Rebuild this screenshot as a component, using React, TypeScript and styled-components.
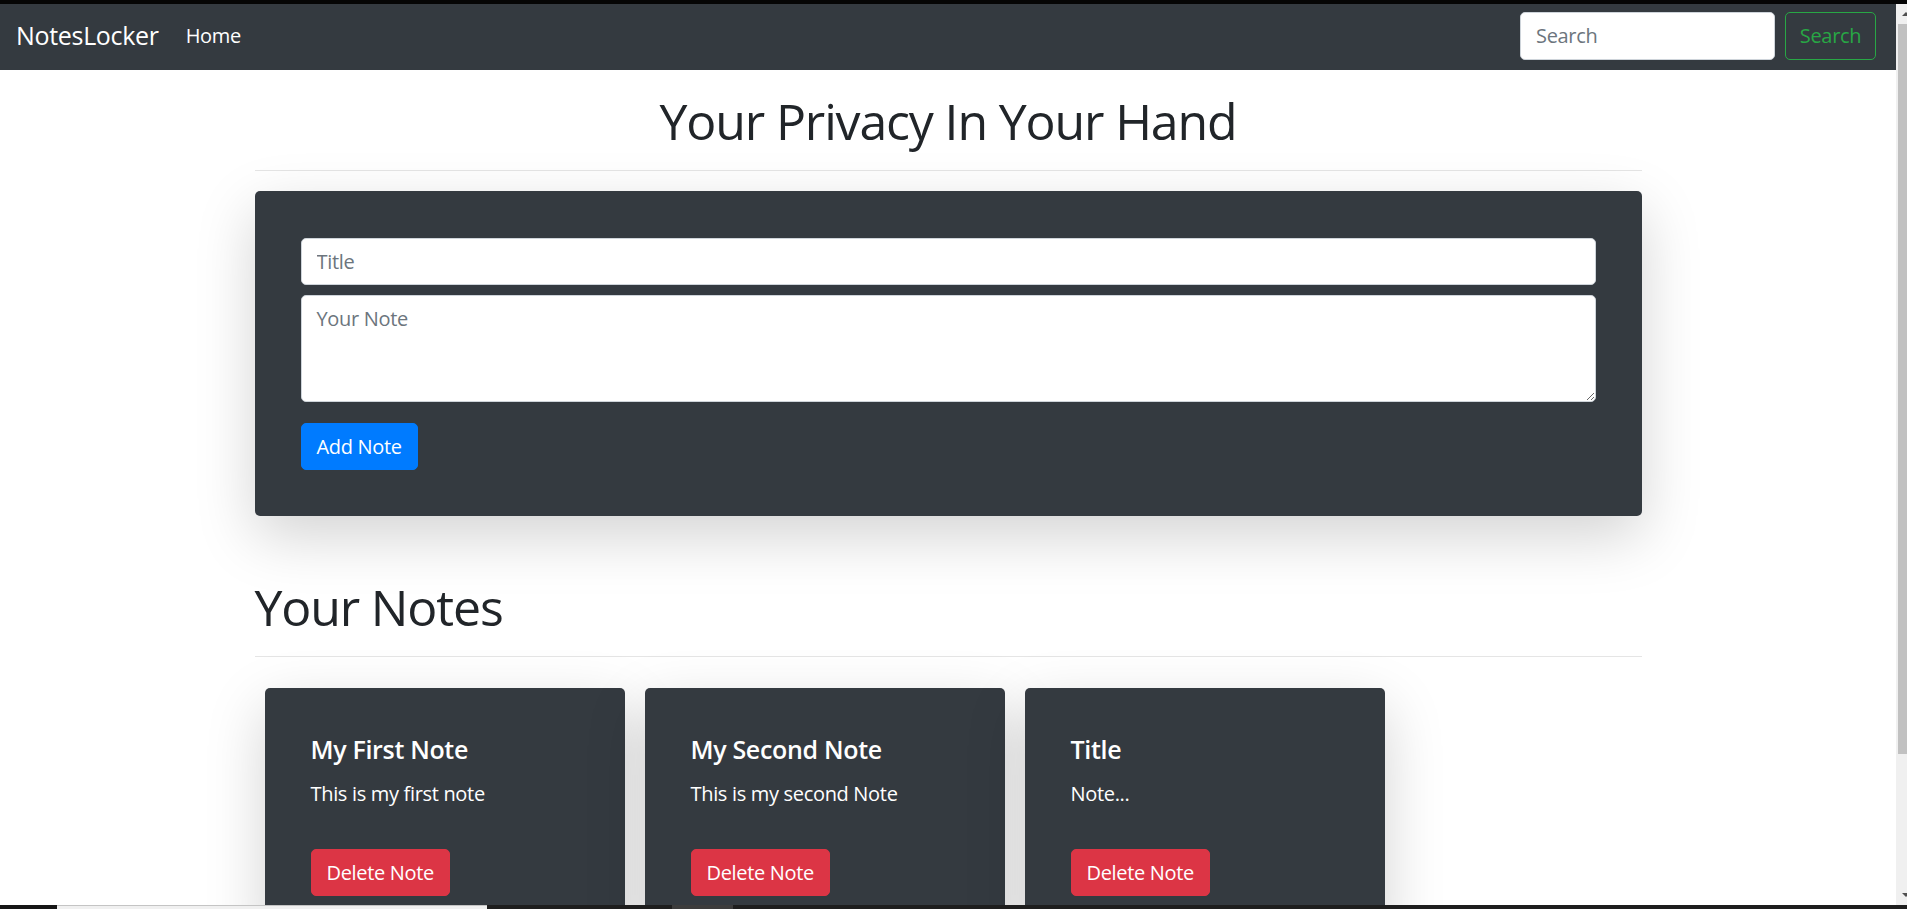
import React from "react";
import styled, { createGlobalStyle } from "styled-components";

const GlobalStyle = createGlobalStyle`
  html, body {
    margin: 0;
    padding: 0;
    height: 100%;
    overflow: hidden;
  }
  body {
    font-family: "Open Sans", "Noto Sans", sans-serif;
    letter-spacing: -0.02em;
    color: #212529;
    background: #fff;
  }
  button, input, textarea {
    font-family: inherit;
    letter-spacing: inherit;
  }
  *, *::before, *::after {
    box-sizing: border-box;
  }
`;

const Screen = styled.div`
  display: flex;
  flex-direction: column;
  width: 1907px;
  height: 909px;
  background: #050505;
`;

const TopStrip = styled.div`
  flex: none;
  height: 4px;
  background: #050505;
`;

const Viewport = styled.div`
  flex: 1;
  min-height: 0;
  display: flex;
`;

const Page = styled.div`
  flex: 1;
  min-width: 0;
  overflow: hidden;
  background: #fff;
`;

const Scrollbar = styled.div`
  flex: none;
  width: 11px;
  overflow: hidden;
  background: #f0f0f0;
  display: flex;
  flex-direction: column;
`;

const ArrowBox = styled.div`
  flex: none;
  height: 20px;
  display: flex;
  align-items: center;
  padding-left: 6px;
`;

const Arrow = styled.span<{ $down?: boolean }>`
  width: 0;
  height: 0;
  border-left: 4px solid transparent;
  border-right: 4px solid transparent;
  ${(p) =>
    p.$down
      ? "border-top: 4px solid #505050;"
      : "border-bottom: 4px solid #505050;"}
`;

const Thumb = styled.div`
  flex: none;
  height: 730px;
  margin-left: 2px;
  background: #c1c1c1;
`;

const Track = styled.div`
  flex: 1;
`;

const BottomStrip = styled.div`
  flex: none;
  height: 4px;
  display: flex;
  background: #1e1e1e;
`;

const StripPart = styled.div<{ $w: number; $c: string; $edge?: boolean }>`
  flex: none;
  width: ${(p) => p.$w}px;
  background: ${(p) => p.$c};
  ${(p) => (p.$edge ? "border-top: 1px solid #c4c4c4;" : "")}
`;

const Navbar = styled.nav`
  height: 66px;
  background: #343a40;
  display: flex;
  align-items: center;
  padding: 0 20px 3px 16px;
`;

const Brand = styled.a`
  font-size: 25px;
  line-height: 37px;
  color: #fff;
  text-decoration: none;
  margin-right: 27px;
`;

const NavLink = styled.a`
  font-size: 20px;
  line-height: 30px;
  color: #fff;
  text-decoration: none;
`;

const SearchForm = styled.form`
  margin-left: auto;
  display: flex;
  gap: 10px;
`;

const SearchInput = styled.input`
  width: 255px;
  height: 48px;
  padding: 0 15px;
  border: 1px solid #ced4da;
  border-radius: 5px;
  font-size: 20px;
  color: #495057;
  background: #fff;
  &::placeholder {
    color: #6c757d;
  }
`;

const OutlineButton = styled.button`
  width: 91px;
  height: 48px;
  padding: 0;
  border: 1px solid #28a745;
  border-radius: 5px;
  background: transparent;
  color: #28a745;
  font-size: 20px;
`;

const Container = styled.main`
  width: 1387px;
  margin: 0 auto;
`;

const Heading = styled.h1<{ $center?: boolean; $top: number }>`
  font-size: 50px;
  line-height: 60px;
  font-weight: 400;
  letter-spacing: -0.023em;
  color: #212529;
  text-align: ${(p) => (p.$center ? "center" : "left")};
  margin: ${(p) => p.$top}px 0 19px;
`;

const Divider = styled.hr`
  border: 0;
  border-top: 1px solid rgba(0, 0, 0, 0.1);
  margin: 0 0 20px;
`;

const Composer = styled.form`
  background: #343a40;
  border-radius: 5px;
  box-shadow: 0 20px 60px rgba(0, 0, 0, 0.175);
  padding: 47px 46px 46px;
  display: flex;
  flex-direction: column;
  align-items: flex-start;
`;

const TitleField = styled.input`
  width: 100%;
  height: 47px;
  margin-bottom: 10px;
  padding: 0 15px;
  border: 1px solid #ced4da;
  border-radius: 5px;
  font-size: 20px;
  line-height: 30px;
  color: #495057;
  &::placeholder {
    color: #6c757d;
  }
`;

const NoteField = styled.textarea`
  display: block;
  width: 100%;
  height: 107px;
  margin: 0 0 21px;
  padding: 7.5px 15px;
  border: 1px solid #ced4da;
  border-radius: 5px;
  font-size: 20px;
  line-height: 30px;
  color: #495057;
  resize: vertical;
  &::placeholder {
    color: #6c757d;
  }
`;

const SolidButton = styled.button<{ $tone: "primary" | "danger" }>`
  height: 47px;
  padding: 0 15px;
  border: 1px solid ${(p) => (p.$tone === "primary" ? "#007bff" : "#dc3545")};
  border-radius: 5px;
  background: ${(p) => (p.$tone === "primary" ? "#007bff" : "#dc3545")};
  color: #fff;
  font-size: 20px;
  line-height: 30px;
`;

const NotesRow = styled.section`
  display: flex;
  gap: 20px;
  padding: 0 10px;
  margin-top: 31px;
`;

const NoteCard = styled.article`
  flex: none;
  width: 360px;
  padding: 46px;
  background: #343a40;
  border-radius: 5px;
  box-shadow: 0 20px 60px rgba(0, 0, 0, 0.175);
  color: #fff;
  display: flex;
  flex-direction: column;
  align-items: flex-start;
`;

const NoteTitle = styled.h5`
  margin: 0 0 15px;
  font-size: 25px;
  line-height: 30px;
  font-weight: 600;
`;

const NoteText = styled.p`
  margin: 0 0 40px;
  font-size: 20px;
  line-height: 30px;
`;

const notes = [
  { title: "My First Note", text: "This is my first note" },
  { title: "My Second Note", text: "This is my second Note" },
  { title: "Title", text: "Note..." },
];

export default function App() {
  return (
    <>
      <GlobalStyle />
      <Screen>
        <TopStrip />
        <Viewport>
          <Page>
            <Navbar>
              <Brand href="#">NotesLocker</Brand>
              <NavLink href="#">Home</NavLink>
              <SearchForm onSubmit={(e) => e.preventDefault()}>
                <SearchInput placeholder="Search" />
                <OutlineButton type="submit">Search</OutlineButton>
              </SearchForm>
            </Navbar>
            <Container>
              <Heading $center $top={21}>
                Your Privacy In Your Hand
              </Heading>
              <Divider />
              <Composer onSubmit={(e) => e.preventDefault()}>
                <TitleField placeholder="Title" />
                <NoteField placeholder="Your Note" />
                <SolidButton $tone="primary" type="submit">
                  Add Note
                </SolidButton>
              </Composer>
              <Heading $top={61}>Your Notes</Heading>
              <Divider />
              <NotesRow>
                {notes.map((n) => (
                  <NoteCard key={n.title}>
                    <NoteTitle>{n.title}</NoteTitle>
                    <NoteText>{n.text}</NoteText>
                    <SolidButton $tone="danger" type="button">
                      Delete Note
                    </SolidButton>
                  </NoteCard>
                ))}
              </NotesRow>
            </Container>
          </Page>
          <Scrollbar>
            <ArrowBox>
              <Arrow />
            </ArrowBox>
            <Thumb />
            <Track />
            <ArrowBox>
              <Arrow $down />
            </ArrowBox>
          </Scrollbar>
        </Viewport>
        <BottomStrip>
          <StripPart $w={57} $c="#161616" />
          <StripPart $w={430} $c="#f0f0f0" $edge />
          <StripPart $w={185} $c="#1e1e1e" />
          <StripPart $w={61} $c="#3c3c3c" />
        </BottomStrip>
      </Screen>
    </>
  );
}
